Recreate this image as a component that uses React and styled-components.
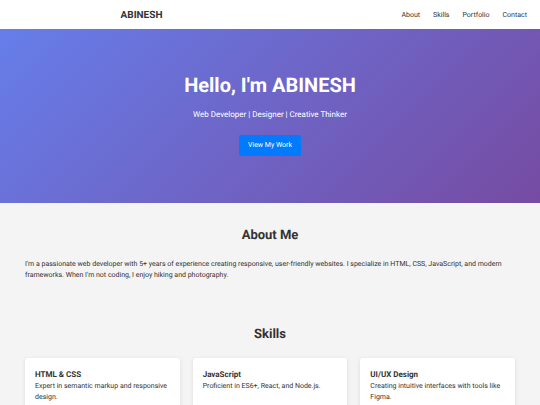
import styled, { createGlobalStyle } from 'styled-components';

const NAV_LINKS = ['About', 'Skills', 'Portfolio', 'Contact'];

const SKILLS = [
  { title: 'HTML & CSS', text: 'Expert in semantic markup and responsive design.' },
  { title: 'JavaScript', text: 'Proficient in ES6+, React, and Node.js.' },
  { title: 'UI/UX Design', text: 'Creating intuitive interfaces with tools like Figma.' },
];

const App = () => {
  return (
    <>
      <GlobalStyle />
      <Header>
        <Logo>ABINESH</Logo>
        <Nav>
          {NAV_LINKS.map(name => (
            <NavLink key={name} href={`#${name.toLowerCase()}`}>
              {name}
            </NavLink>
          ))}
        </Nav>
      </Header>
      <main>
        <Hero>
          <HeroTitle>Hello, I'm ABINESH</HeroTitle>
          <HeroText>Web Developer | Designer | Creative Thinker</HeroText>
          <HeroButton href="#portfolio">View My Work</HeroButton>
        </Hero>
        <Section id="about">
          <SectionTitle>About Me</SectionTitle>
          <Text>
            I'm a passionate web developer with 5+ years of experience creating responsive, user-friendly websites. I
            specialize in HTML, CSS, JavaScript, and modern frameworks. When I'm not coding, I enjoy hiking and
            photography.
          </Text>
        </Section>
        <Section id="skills">
          <SectionTitle>Skills</SectionTitle>
          <SkillGrid>
            {SKILLS.map(({ title, text }) => (
              <SkillCard key={title}>
                <SkillTitle>{title}</SkillTitle>
                <Text>{text}</Text>
              </SkillCard>
            ))}
          </SkillGrid>
        </Section>
      </main>
    </>
  );
};

const GlobalStyle = createGlobalStyle`
  * {
    margin: 0;
    padding: 0;
    box-sizing: border-box;
  }
  html {
    scrollbar-width: none;
  }
  body {
    background: #f4f4f4;
    color: #333;
    font-family: Roboto, "Liberation Sans", sans-serif;
    font-size: 7px;
    line-height: 11px;
    text-rendering: geometricPrecision;
  }
`;

const Header = styled.header`
  display: grid;
  grid-template-columns: 1fr 1fr;
  align-items: center;
  padding: 8px 13px 6px;
  background: #fff;
`;

const Logo = styled.div`
  font-size: 10px;
  font-weight: 700;
  line-height: 15px;
  text-align: center;
`;

const Nav = styled.nav`
  display: flex;
  justify-content: flex-end;
  gap: 13px;
`;

const NavLink = styled.a`
  color: #333;
  text-decoration: none;
  &:hover {
    color: #007bff;
  }
`;

const Hero = styled.section`
  display: flex;
  flex-direction: column;
  align-items: center;
  padding: 40px 13px 47px;
  background: linear-gradient(135deg, #667eea 0%, #764ba2 100%);
  color: #fff;
  text-align: center;
`;

const HeroTitle = styled.h1`
  margin-bottom: 7px;
  font-size: 20px;
  line-height: 32px;
`;

const HeroText = styled.p`
  margin-bottom: 14px;
  font-size: 8px;
  line-height: 13px;
`;

const HeroButton = styled.a`
  padding: 5px 9px;
  border-radius: 2px;
  background: #007bff;
  color: #fff;
  text-decoration: none;
  &:hover {
    background: #0056b3;
  }
`;

const Section = styled.section`
  padding: 22px 25px 21px;
`;

const SectionTitle = styled.h2`
  margin-bottom: 13px;
  font-size: 13px;
  line-height: 21px;
  text-align: center;
`;

const Text = styled.p`
  line-height: 11px;
`;

const SkillGrid = styled.div`
  display: grid;
  grid-template-columns: repeat(3, 1fr);
  gap: 13px;
`;

const SkillCard = styled.article`
  padding: 10px;
  border-radius: 3px;
  background: #fff;
  box-shadow: 0 1px 4px rgba(0, 0, 0, 0.1);
`;

const SkillTitle = styled.h3`
  font-size: 8px;
  line-height: 13px;
`;

export default App;
